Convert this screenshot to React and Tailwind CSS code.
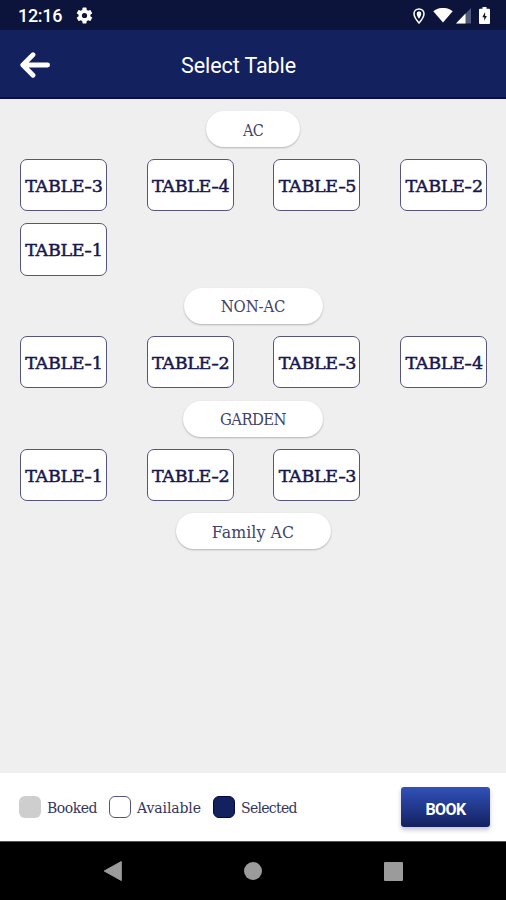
import React from 'react';

const serif = "font-['DejaVu_Serif_Condensed','DejaVu_Serif',serif]";

const sections = [
  { name: 'AC', pill: 'w-[94px] pt-[3px] text-[16px] tracking-[-0.8px]', tables: [3, 4, 5, 2, 1] },
  { name: 'NON-AC', pill: 'w-[139px] pt-[2px] text-[16.500px] tracking-[-0.100px]', tables: [1, 2, 3, 4] },
  { name: 'GARDEN', pill: 'w-[140px] pt-[3px] text-[16.500px] tracking-[-0.600px]', tables: [1, 2, 3] },
  { name: 'Family AC', pill: 'w-[155px] pt-[2px] text-[17.500px] tracking-[0.100px]', tables: [] },
];

function StatusBar() {
  return (
    <div className="flex h-[30px] shrink-0 items-center bg-[#0c143c] pl-[18px] pr-[16px] pt-px text-white">
      <span className="w-[57px] text-[18px] font-medium leading-none tracking-[-0.3px]">12:16</span>
      <svg className="h-[19px] w-[19px]" viewBox="0 0 24 24" fill="currentColor">
        <path d="M19.4 13a7.5 7.5 0 0 0 0-2l2.1-1.6a.5.5 0 0 0 .1-.7l-2-3.4a.5.5 0 0 0-.6-.2l-2.5 1a7 7 0 0 0-1.7-1L14.5 2.4a.5.5 0 0 0-.5-.4h-4a.5.5 0 0 0-.5.4l-.4 2.7a7 7 0 0 0-1.7 1l-2.4-1a.5.5 0 0 0-.7.2l-2 3.4a.5.5 0 0 0 .2.7L4.6 11a7.5 7.5 0 0 0 0 2l-2.1 1.6a.5.5 0 0 0-.2.7l2 3.4c.1.2.4.3.7.2l2.4-1a7 7 0 0 0 1.7 1l.4 2.7c0 .2.2.4.5.4h4c.3 0 .5-.2.5-.4l.3-2.7a7 7 0 0 0 1.7-1l2.5 1c.2.1.5 0 .6-.2l2-3.4a.5.5 0 0 0-.1-.7ZM12 15.3a3.3 3.3 0 1 1 0-6.6 3.3 3.3 0 0 1 0 6.6Z" />
      </svg>
      <svg className="ml-auto h-[16px] w-[12px]" viewBox="0 0 12 16">
        <path d="M6 .9C3.2.9 1 3 1 5.8 1 9.4 6 15 6 15s5-5.600 5-9.200C11 3 8.800.9 6 .9Z" fill="none" stroke="white" strokeWidth="1.5" />
        <path d="M6 3.300a2.400 2.400 0 0 0-2.300 2.500C3.700 7.700 6 10.800 6 10.800s2.300-3.100 2.300-5A2.400 2.400 0 0 0 6 3.300Z" fill="white" />
      </svg>
      <svg className="ml-[8px] h-[16px] w-[20px]" viewBox="0 0 20 16" fill="white">
        <path d="M0.300 3.300C5.700-1.200 14.300-1.200 19.700 3.300L10 14.600Z" />
      </svg>
      <svg className="ml-[3px] h-[16px] w-[15px]" viewBox="0 0 15 16">
        <path d="M15 0v15.500H0Z" fill="#535978" />
        <path d="M9.500 5.400V15.500H0Z" fill="white" />
      </svg>
      <svg className="ml-[8px] h-[17px] w-[11px]" viewBox="0 0 11 17">
        <path d="M3.500 0h4v1.700H10q1 0 1 1V16q0 1-1 1H1q-1 0-1-1V2.700q0-1 1-1h2.500Z" fill="white" />
        <path d="M6.100 5 3.300 10.200H5.200v3.600L7.900 9H6.100Z" fill="#0c143c" />
      </svg>
    </div>
  );
}

function Header() {
  return (
    <header className="flex h-[69px] shrink-0 items-center border-b-2 border-[#090f4e] bg-[#14215f] px-[20px] text-white">
      <svg className="mt-[2px] h-[26px] w-[30px]" viewBox="0 0 30 26" fill="none" stroke="white" strokeWidth="4.800" strokeLinecap="round" strokeLinejoin="round">
        <path d="M13 2.800 2.800 13 13 23.200M3 13h24.600" />
      </svg>
      <h1 className="ml-[131px] mt-[4px] text-[21.500px] leading-none tracking-[-0.080px]">Select Table</h1>
    </header>
  );
}

function Legend({ swatch, label, text }) {
  return (
    <div className="flex items-center">
      <span className={'size-[22px] shrink-0 rounded-[6px] ' + swatch} />
      <span className={"ml-[6px] whitespace-nowrap pt-[2px] text-[#35355c] font-['DejaVu_Serif',serif] " + text}>{label}</span>
    </div>
  );
}

export default function App() {
  return (
    <div className="flex h-[900px] w-[506px] flex-col overflow-hidden bg-[#efefef] font-[Roboto,sans-serif]">
      <StatusBar />
      <Header />
      <main className={'flex flex-1 flex-col pt-[12px] ' + serif}>
        {sections.map((section) => (
          <section key={section.name} className="mb-[12.400px]">
            <h2 className={'mx-auto flex h-[36px] items-center justify-center rounded-full bg-white font-normal text-[#42426b] shadow-[0_1px_2px_rgba(0,0,0,0.25)] ' + section.pill}>
              {section.name}
            </h2>
            <div className="-mr-px mt-[12px] grid grid-cols-4 gap-y-[12px]">
              {section.tables.map((n) => (
                <button key={n} className="mx-auto flex h-[52.300px] w-[87px] items-center justify-center whitespace-nowrap rounded-[7px] border border-[#55557f] bg-white pl-px pt-[2px] font-['DejaVu_Serif',serif] text-[17.500px] tracking-[-0.350px] text-[#171750] [-webkit-text-stroke:0.500px_#171750]">
                  TABLE<span className="mx-px inline-block scale-x-130">-</span>{n}
                </button>
              ))}
            </div>
          </section>
        ))}
      </main>
      <footer className="flex h-[68px] shrink-0 items-center bg-white pl-[19px] pr-[16px]">
        <div className="flex items-center gap-[12px]">
          <Legend swatch="bg-[#cecece]" label="Booked" text="w-[50px] text-[14px] tracking-[-0.500px]" />
          <Legend swatch="border border-[#55557f] bg-white" label="Available" text="w-[64px] text-[14px] tracking-[-0.100px]" />
          <Legend swatch="border border-[#050548] bg-[#14215f]" label="Selected" text="text-[14px] tracking-[-0.700px]" />
        </div>
        <button className="ml-auto h-[40px] w-[89px] rounded-[3px] bg-linear-to-b from-[#3152ba] to-[#142160] pt-[6px] text-[16px] font-bold tracking-[-0.600px] text-white shadow-[0_3px_4px_rgba(30,30,90,0.25)]">
          BOOK
        </button>
      </footer>
      <nav className="grid h-[59px] shrink-0 grid-cols-[140px_140px_140px] justify-center border-t border-[#555] bg-black">
        <svg className="m-auto h-[22px] w-[20px]" viewBox="0 0 20 22"><path d="M18.300 1.500v19L1.200 11Z" fill="#9b9b9b" stroke="#9b9b9b" strokeLinejoin="round" /></svg>
        <span className="m-auto size-[18px] rounded-full bg-[#9b9b9b]" />
        <span className="m-auto size-[19px] rounded-[1px] bg-[#9b9b9b]" />
      </nav>
    </div>
  );
}
